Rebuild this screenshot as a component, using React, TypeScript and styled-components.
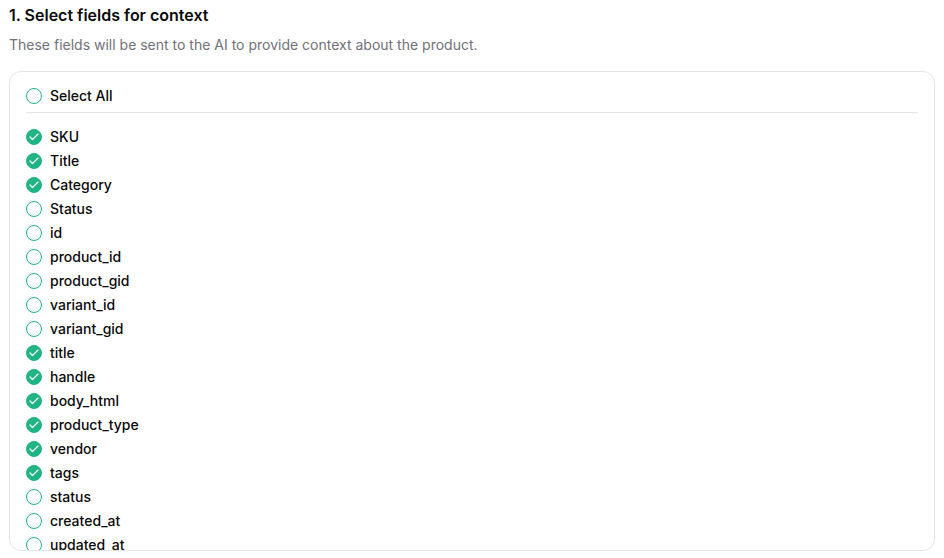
import styled, { createGlobalStyle } from "styled-components";

const GlobalStyle = createGlobalStyle`
    html, body {
        margin: 0;
        padding: 0;
        height: 100%;
        background: #ffffff;
        overflow: hidden;
    }
    body {
        font-family: Inter, "Liberation Sans", sans-serif;
    }
`

const Page = styled.div`
    width: 944px;
    height: 558px;
    box-sizing: border-box;
    padding: 5px 9px 7px 9px;
    display: flex;
    flex-direction: column;
`

const Heading = styled.h2`
    margin: 0;
    font-size: 16px;
    line-height: 21px;
    font-weight: 600;
    color: #0a0a0a;
`

const Subtitle = styled.p`
    margin: 9px 0 16px;
    font-size: 14px;
    line-height: 20px;
    font-weight: 400;
    color: #71717a;
`

const Card = styled.div`
    flex: 1;
    min-height: 0;
    overflow: hidden;
    border: 1px solid #e5e5e5;
    border-radius: 12px;
    padding: 12px 16px;
`

const SelectAllRow = styled.div`
    padding-bottom: 4px;
    margin-bottom: 12px;
    border-bottom: 1px solid #e5e5e5;
`

const FieldList = styled.div`
    display: flex;
    flex-direction: column;
`

const Field = styled.label`
    display: flex;
    align-items: center;
    gap: 8px;
    height: 24px;
    font-size: 14px;
    line-height: 20px;
    font-weight: 500;
    color: #0a0a0a;
`

const Circle = styled.span<{ $checked: boolean }>`
    box-sizing: border-box;
    width: 16px;
    height: 16px;
    flex-shrink: 0;
    border-radius: 50%;
    border: 1.5px solid #1fb482;
    background: ${({ $checked }) => ($checked ? "#1fb482" : "#ffffff")};
    display: flex;
    align-items: center;
    justify-content: center;
`

const CheckMark = () => (
    <svg width="12" height="12" viewBox="0 0 24 24" fill="none" stroke="#ffffff" strokeWidth="2.4" strokeLinecap="round" strokeLinejoin="round">
        <path d="M20 6 9 17l-5-5" />
    </svg>
)

const fields = [
    { name: "SKU", checked: true },
    { name: "Title", checked: true },
    { name: "Category", checked: true },
    { name: "Status", checked: false },
    { name: "id", checked: false },
    { name: "product_id", checked: false },
    { name: "product_gid", checked: false },
    { name: "variant_id", checked: false },
    { name: "variant_gid", checked: false },
    { name: "title", checked: true },
    { name: "handle", checked: true },
    { name: "body_html", checked: true },
    { name: "product_type", checked: true },
    { name: "vendor", checked: true },
    { name: "tags", checked: true },
    { name: "status", checked: false },
    { name: "created_at", checked: false },
    { name: "updated_at", checked: false },
];

const FieldRow = ({ name, checked }: { name: string; checked: boolean }) => (
    <Field>
        <Circle $checked={checked}>{checked && <CheckMark />}</Circle>
        <span>{name}</span>
    </Field>
)

const App = () => {
    return (
        <Page>
            <GlobalStyle />
            <Heading>1. Select fields for context</Heading>
            <Subtitle>These fields will be sent to the AI to provide context about the product.</Subtitle>
            <Card>
                <SelectAllRow>
                    <FieldRow name="Select All" checked={false} />
                </SelectAllRow>
                <FieldList>
                    {fields.map((field) => (
                        <FieldRow key={field.name} name={field.name} checked={field.checked} />
                    ))}
                </FieldList>
            </Card>
        </Page>
    )
};

export default App;
